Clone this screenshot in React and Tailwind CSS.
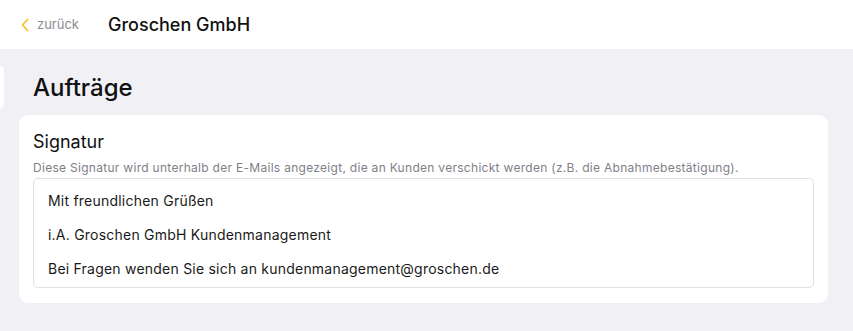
import React from 'react';

const lines = [
    'Mit freundlichen Grüßen',
    'i.A. Groschen GmbH Kundenmanagement',
    'Bei Fragen wenden Sie sich an kundenmanagement@groschen.de',
];

const App = () => {
    return (
        <div className="relative min-h-[331px] bg-[#f0f0f5] font-['Inter',sans-serif]">
            <header className="flex h-[49px] items-center bg-white">
                <button className="ml-[20px] flex items-center gap-[7px] text-[13px] text-[#8a8a92]">
                    <svg width="10" height="14" viewBox="0 0 10 14" fill="none">
                        <path d="M7.5 1.5L2.5 7l5 5.5" stroke="#f5c52a" strokeWidth="1.8" strokeLinecap="round" strokeLinejoin="round" />
                    </svg>
                    <span className="leading-none">zurück</span>
                </button>
                <h1 className="ml-[29px] text-[18px] font-medium text-[#111]">Groschen GmbH</h1>
            </header>

            {/* sidebar tab peeking in from the left */}
            <div className="absolute left-0 top-[66px] h-[42px] w-[4px] rounded-r-[6px] bg-white" />

            <main className="pl-[19px] pr-[25px] pt-[24px] pb-[29px]">
                <h2 className="ml-[14px] text-[24px] font-medium leading-[30px] text-[#111]">Aufträge</h2>
                <section className="mt-[12px] rounded-[9px] bg-white px-[14px] pt-[15px] pb-[15px]">
                    <h3 className="text-[18px] leading-[24px] text-[#111]">Signatur</h3>
                    <p className="mt-[6px] text-[12px] leading-[16px] tracking-[0.29px] text-[#808088]">
                        Diese Signatur wird unterhalb der E-Mails angezeigt, die an Kunden verschickt werden (z.B. die Abnahmebestätigung).
                    </p>
                    <div className="mt-[2px] flex h-[110px] flex-col gap-[14px] rounded-[5px] border border-[#dfdfe3] px-[14px] pt-[12px]">
                        {lines.map((line) => (
                            <div key={line} className="text-[14px] leading-[20px] tracking-[0.22px] text-[#1a1a1a]">
                                {line}
                            </div>
                        ))}
                    </div>
                </section>
            </main>
        </div>
    );
};

export default App;
